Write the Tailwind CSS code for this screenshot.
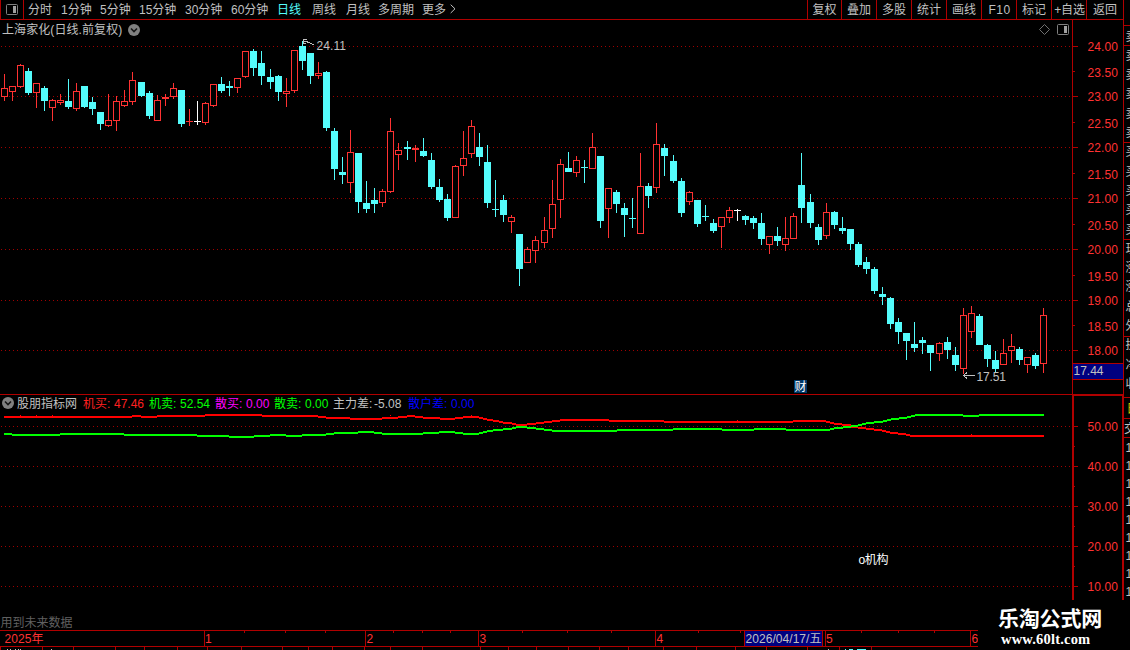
<!DOCTYPE html>
<html lang="zh-CN">
<head>
<meta charset="utf-8">
<title>上海家化 日线</title>
<script src="https://cdn.jsdelivr.net/npm/@tailwindcss/browser@4"></script>
</head>
<body class="bg-black">
<div class="relative flex h-[650px] w-[1130px] overflow-hidden bg-black font-['Liberation_Sans','Noto_Sans_CJK_SC',sans-serif] text-[12px] leading-[19px] text-[#c0c0c0]">
  <div class="flex w-[1124px] shrink-0 flex-col">
    <header class="flex h-[20px] border-b border-[#b00000] leading-[21px]">
      <div class="flex w-[24px] items-center justify-center border-x border-[#b00000]">
        <svg class="mb-px" width="12" height="11" viewBox="0 0 12 11"><rect x=".5" y=".5" width="11" height="10" rx="1" fill="none" stroke="#808080"/><rect x="7" y="2" width="3" height="7" fill="#a0a0a0"/></svg>
      </div>
      <nav class="flex flex-1 whitespace-nowrap pl-[4px]">
        <span class="w-[33px]">分时</span><span class="w-[39px]">1分钟</span><span class="w-[39px]">5分钟</span><span class="w-[46px]">15分钟</span><span class="w-[46px]">30分钟</span><span class="w-[46px]">60分钟</span><span class="w-[35px] text-[#54fcfc]">日线</span><span class="w-[34px]">周线</span><span class="w-[32px]">月线</span><span class="w-[44px]">多周期</span><span class="w-[28px]">更多</span>
        <svg class="mt-[4px]" width="6" height="10" viewBox="0 0 6 10"><path d="M.7 .7L5 4.8L.7 9" fill="none" stroke="#c0c0c0"/></svg>
      </nav>
      <nav class="flex whitespace-nowrap text-center">
        <span class="w-[34px] border-l border-[#b00000]">复权</span><span class="w-[35px] border-l border-[#b00000]">叠加</span><span class="w-[35px] border-l border-[#b00000]">多股</span><span class="w-[35px] border-l border-[#b00000]">统计</span><span class="w-[35px] border-l border-[#b00000]">画线</span><span class="w-[35px] border-l border-[#b00000] pl-px tracking-[0.5px]">F10</span><span class="w-[35px] border-l border-[#b00000]">标记</span><span class="w-[35px] border-l border-[#b00000] pl-px tracking-[-0.2px]">+自选</span><span class="w-[38px] border-x border-[#b00000]">返回</span>
      </nav>
    </header>

    <section class="relative h-[374px]">
      <svg id="price" class="block" width="1124" height="374" viewBox="0 20 1124 374" shape-rendering="crispEdges"></svg>
      <div class="absolute inset-x-0 top-0 flex h-[19px] items-center pl-[2px]">
        <span class="w-[121px] pt-[2px] whitespace-nowrap tracking-[0.08px]">上海家化(日线.前复权)</span>
        <svg class="ml-[5px]" width="12" height="12" viewBox="0 0 12 12"><circle cx="6" cy="6" r="6" fill="#808080"/><path d="M3 4.5L6 7.5L9 4.5" fill="none" stroke="#151515" stroke-width="1.6"/></svg>
        <span class="flex-1"></span>
        <svg width="11" height="11" viewBox="0 0 11 11"><path d="M5.5 .5L10.5 5.5L5.5 10.5L.5 5.5Z" fill="none" stroke="#707070"/></svg>
        <svg class="mr-[55px] ml-[7px]" width="12" height="11" viewBox="0 0 12 11"><rect x=".5" y=".5" width="11" height="10" rx="1" fill="none" stroke="#808080"/><rect x="7" y="2" width="3" height="7" fill="#a0a0a0"/></svg>
      </div>
    </section>

    <section class="relative h-[236px]">
      <svg id="indicator" class="block" width="1124" height="236" viewBox="0 394 1124 236" shape-rendering="crispEdges"></svg>
      <div class="absolute inset-x-0 top-0 flex h-[19px] whitespace-nowrap pl-[2px] leading-[21px]">
        <svg class="mt-[3px] mr-[3px]" width="12" height="12" viewBox="0 0 12 12"><circle cx="6" cy="6" r="6" fill="#808080"/><path d="M3 4.5L6 7.5L9 4.5" fill="none" stroke="#151515" stroke-width="1.6"/></svg>
        <span class="w-[66px]">股朋指标网</span>
        <span class="w-[31px] text-[#ff2020]">机买:</span><span class="w-[35px] text-[#ff2020]">47.46</span>
        <span class="w-[31px] text-[#00ff00]">机卖:</span><span class="w-[35px] text-[#00ff00]">52.54</span>
        <span class="w-[31px] text-[#ff00ff]">散买:</span><span class="w-[28px] text-[#ff00ff]">0.00</span>
        <span class="w-[31px] text-[#00ff00]">散卖:</span><span class="w-[28px] text-[#00ff00]">0.00</span>
        <span class="w-[41px]">主力差:</span><span class="w-[34px]">-5.08</span>
        <span class="w-[43px] text-[#0000ff]">散户差:</span><span class="text-[#0000ff]">0.00</span>
      </div>
    </section>

    <footer class="h-[20px]">
      <svg id="timeline" class="block" width="1124" height="20" viewBox="0 630 1124 20" shape-rendering="crispEdges"></svg>
    </footer>
  </div>

  <aside class="w-[6px] shrink-0 overflow-hidden">
    <svg id="strip" class="block" width="6" height="650" viewBox="1124 0 6 650" shape-rendering="crispEdges"></svg>
  </aside>

  <div class="absolute top-[600px] left-[978px] flex h-[50px] w-[152px] flex-col bg-black pt-[4px] pl-[20px] text-white">
    <span class="h-[27px] whitespace-nowrap font-['Noto_Sans_CJK_SC',sans-serif] text-[21px] leading-[26px] font-bold tracking-[-0.2px]">乐淘公式网</span>
    <span class="pl-[3px] font-['Liberation_Serif',serif] text-[14.5px] leading-[16px] font-bold tracking-[0.2px]">www.60lt.com</span>
  </div>
</div>

<script>
const RED = '#ff3232', CYAN = '#54fcfc', FRAME = '#b00000', GRID = '#a00000', SILVER = '#c0c0c0';
const rect = (x, y, w, h, f) => `<rect x="${x}" y="${y}" width="${w}" height="${h}" fill="${f}"/>`;
const text = (x, y, s, f, len) => `<text x="${x}" y="${y}" fill="${f}" font-size="12"${len ? ` textLength="${len}"` : ''}>${s}</text>`;
const grid = y => `<path d="M1 ${y + .5}H1072" stroke="${GRID}" stroke-dasharray="1 3"/>`;

// x, high, body top, body bottom, low, type (r rising, c falling, w flat)
const candles = `4,74,88,97,101,r 12,86,86,92,101,r 20,64,65,87,88,r 28,68,71,93,95,c 36,83,83,93,108,r 44,86,88,101,111,c 52,99,100,108,121,r 60,94,100,103,105,r 68,79,101,107,109,c 76,83,91,109,111,r 84,86,86,107,108,c 92,97,102,109,115,c 100,112,112,124,130,c 108,94,120,126,127,r 116,96,101,121,131,r 124,90,101,106,107,r 132,72,80,102,105,r 141,82,82,96,97,c 149,91,93,116,119,c 157,95,100,121,121,r 165,94,97,99,106,r 173,83,88,97,99,r 181,90,90,124,127,c 189,109,121,122,126,r 197,101,121,122,125,w 205,102,103,123,125,r 213,84,84,106,107,r 221,77,84,91,93,c 229,81,86,88,96,c 237,78,78,88,93,r 245,51,51,77,78,r 253,49,51,68,76,c 261,51,63,76,85,c 270,69,77,82,89,c 278,75,76,92,101,c 286,78,91,94,107,r 294,50,50,91,93,r 302,41,46,61,70,c 310,53,53,76,84,c 318,62,73,76,79,r 326,71,72,128,131,c 334,128,131,169,180,c 342,157,172,175,184,c 350,130,152,183,193,r 358,153,153,202,213,c 366,181,203,209,213,c 374,188,200,204,213,c 382,189,191,203,207,r 390,118,131,192,193,r 398,143,150,155,170,r 407,141,147,149,160,c 415,145,148,150,162,r 423,138,151,156,157,c 431,153,160,187,189,c 439,179,187,200,202,c 447,194,199,218,221,c 455,165,166,218,218,r 463,131,158,166,176,r 471,120,126,154,158,r 479,133,147,157,166,c 487,145,162,203,208,c 495,180,209,210,217,c 503,195,200,215,222,c 511,215,217,222,233,r 519,234,234,269,286,c 527,247,249,263,263,r 535,236,240,251,263,r 544,217,230,243,248,r 552,180,204,229,238,r 560,159,164,200,218,r 568,152,168,172,172,c 576,156,160,173,177,r 584,160,167,168,183,c 592,133,147,169,169,r 600,156,156,221,228,c 608,188,188,209,238,r 616,190,192,204,213,c 624,203,208,215,237,c 632,198,218,219,228,c 640,153,186,234,234,r 648,183,186,196,208,c 656,123,144,188,193,r 664,144,148,156,176,c 673,155,161,181,183,c 681,178,181,213,217,c 689,191,192,202,205,r 697,200,200,224,227,c 705,205,216,217,221,c 713,219,223,231,233,c 721,217,217,227,248,r 729,207,210,218,223,r 737,209,210,211,221,w 745,215,216,220,225,c 753,216,218,223,229,c 761,213,223,239,245,c 769,236,236,245,254,r 777,227,236,241,246,c 785,217,238,245,251,r 793,213,216,239,239,r 801,153,185,208,223,c 810,194,202,223,228,c 818,224,227,240,245,c 826,203,212,236,239,r 834,211,212,225,229,c 842,217,228,231,234,c 850,229,229,244,250,c 858,242,244,265,267,c 866,257,262,269,274,c 874,267,269,291,294,c 882,287,294,297,305,c 890,297,298,324,329,c 898,318,322,332,344,c 906,333,333,341,360,c 914,322,344,348,352,c 922,337,340,343,354,c 930,345,345,353,371,c 939,342,343,354,361,r 947,337,342,350,359,c 955,347,355,365,371,c 963,308,315,369,374,r 971,306,313,332,338,r 979,314,316,345,345,c 987,344,345,359,367,c 995,351,360,369,372,c 1003,339,353,365,365,r 1011,334,346,351,363,r 1019,347,349,360,365,c 1027,357,357,365,373,r 1035,353,355,366,369,c 1043,308,315,364,373,r`
  .split(' ').map(s => s.split(','));

let p = [46, 96, 147, 198, 249, 300, 350].map(y => grid(y) + rect(1073, y, 5, 1, FRAME)).join('');
p += [71, 122, 173, 224, 275, 325].map(y => rect(1073, y, 2, 1, FRAME)).join('');
p += rect(1072, 20, 1, 374, FRAME) + rect(1123, 20, 1, 374, FRAME);
for (const [xs, h, t, b, l, k] of candles) {
  const x = +xs, H = +h, T = +t, B = +b, L = +l, f = k === 'r' ? RED : k === 'c' ? CYAN : '#ffffff';
  p += rect(x, H, 1, T - H, f) + rect(x, B, 1, L - B, f);
  if (k === 'r' && B - T > 2) p += `<rect x="${x - 2.5}" y="${T + .5}" width="6" height="${B - T - 1}" fill="#000" stroke="${f}"/>`;
  else p += rect(x - 3, T, 7, B - T, f);
}
[['24.00', 51], ['23.50', 77], ['23.00', 101], ['22.50', 128], ['22.00', 152], ['21.50', 179], ['21.00', 203], ['20.50', 230], ['20.00', 254], ['19.50', 281], ['19.00', 305], ['18.50', 331], ['18.00', 355]]
  .forEach(([s, y]) => p += text(1087.5, y, s, RED, 30.5));
p += rect(1073, 363, 50, 17, '#000080') + rect(1073, 363, 50, 1, FRAME) + rect(1073, 379, 50, 1, FRAME) + text(1073.5, 375, '17.44', SILVER, 30);
p += text(316.5, 50, '24.11', SILVER, 29.5) + text(976.5, 381, '17.51', SILVER, 29.5);
p += rect(303, 39, 4, 1, SILVER) + rect(303, 40, 1, 4, SILVER) + rect(304, 41, 4, 1, SILVER) + rect(307, 42, 3, 1, SILVER) + rect(310, 43, 2, 1, SILVER) + rect(312, 44, 2, 1, SILVER) + rect(304, 43, 2, 1, SILVER);
p += `<path d="M964 375.5H975M967 372.5L963.5 375.5L967 378.5" fill="none" stroke="${SILVER}"/>`;
p += rect(794, 380, 13, 13, '#003868') + text(794.5, 391, '财', '#fff');
document.getElementById('price').innerHTML = p;

// step lines: [start x, y] pairs, held until the next start
const redLine = [[4,416],[132,415],[141,416],[157,415],[205,414],[262,415],[318,416],[326,417],[350,418],[382,417],[398,416],[407,415],[415,416],[423,417],[440,418],[455,417],[463,416],[479,417],[483,418],[487,419],[493,420],[499,421],[503,422],[512,423],[516,424],[527,423],[536,422],[544,421],[552,420],[560,419],[609,420],[664,421],[793,420],[826,421],[830,422],[834,423],[842,424],[851,426],[858,427],[866,428],[874,429],[882,430],[886,431],[890,432],[898,433],[906,434],[910,435],[1044,435]];
const greenLine = [[4,433],[12,434],[60,433],[124,434],[197,435],[229,436],[254,435],[270,434],[286,435],[302,434],[326,433],[334,432],[358,431],[374,432],[382,433],[423,432],[439,431],[455,432],[463,433],[479,432],[483,431],[487,430],[493,429],[503,428],[512,427],[516,426],[527,427],[536,428],[544,429],[552,430],[617,429],[673,428],[722,429],[754,428],[786,429],[830,428],[834,427],[843,426],[851,425],[858,424],[862,423],[866,422],[874,421],[883,420],[887,419],[891,418],[899,417],[907,416],[911,415],[915,414],[963,415],[979,414],[1044,414]];
const steps = (pts, f) => pts.slice(0, -1).map(([x, y], i) => rect(x, y, pts[i + 1][0] - x, 2, f)).join('');
let q = [426, 466, 506, 546, 586].map((y, i) => grid(y) + rect(1074, y, 4, 1, FRAME) + text(1087.5, y + 5, (50 - i * 10) + '.00', RED, 30.5)).join('');
q += [446, 486, 526, 566].map(y => rect(1074, y, 1, 1, FRAME)).join('');
q += rect(0, 394, 1124, 1, FRAME) + rect(1072, 394, 52, 2, FRAME) + rect(1072, 394, 2, 206, FRAME) + rect(1122, 394, 2, 206, FRAME);
q += steps(redLine, '#ff0000') + steps(greenLine, '#00ff00');
q += [20, 36, 52, 390, 471].map(x => rect(x, 415, 1, 1, '#ff0000')).join('') + rect(737, 420, 1, 1, '#ff0000') + rect(971, 434, 1, 1, '#ff0000');
q += text(858.5, 563.5, 'o机构', '#ffffff', 30) + text(0.5, 626.5, '用到未来数据', '#606060');
document.getElementById('indicator').innerHTML = q;

let t = rect(0, 630, 978, 1, FRAME) + rect(0, 646, 978, 1, FRAME);
t += [204, 365, 478, 655, 744, 822, 825, 970].map(x => rect(x, 631, 1, 15, FRAME)).join('');
t += [244, 285, 325, 393, 422, 450, 522, 567, 611, 698, 740, 861, 898, 934].map(x => rect(x, 631, 1, 2, FRAME)).join('');
t += [0, 42, 73, 115, 144, 177, 207, 241, 282, 308, 332, 364, 390, 422, 480, 508, 536, 568, 599, 628, 663, 696, 735, 766, 807, 839, 871].map(x => rect(x, 647, 1, 3, FRAME)).join('');
t += rect(745, 631, 77, 15, '#000080') + text(745.5, 642.5, '2026/04/17/五', SILVER, 76);
t += text(4.5, 643, '2025年', RED, 39);
[['1', 205], ['2', 366.5], ['3', 479.5], ['4', 656.5], ['5', 826], ['6', 971.5]].forEach(([s, x]) => t += text(x, 643, s, RED));
t += [7, 10, 15, 18, 20, 51].map(x => rect(x, 649, 1, 1, SILVER)).join('') + rect(828, 649, 1, 1, SILVER) + rect(845, 649, 1, 1, CYAN) + rect(849, 649, 4, 1, CYAN) + rect(857, 649, 9, 1, CYAN);
document.getElementById('timeline').innerHTML = t;

let s = [25, 45, 142, 239, 336, 397, 418, 437].map(y => rect(1124, y, 6, 1, FRAME)).join('');
'卖卖卖卖卖卖买买买买买现涨涨总外换净收'.split('').forEach((c, i) => s += text(1125.5, 40.5 + i * 19.3, c, SILVER));
s += text(1126.5, 412.5, '日', '#c8c800') + text(1124, 433, '交', SILVER);
for (let i = 0; i < 9; i++) s += text(1125.5, 452 + i * 18, '1', SILVER);
document.getElementById('strip').innerHTML = s;
</script>
</body>
</html>
